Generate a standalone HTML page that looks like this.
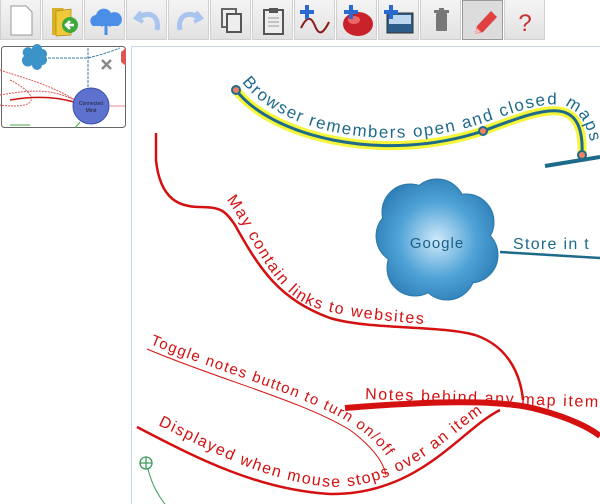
<!DOCTYPE html>
<html><head><meta charset="utf-8"><style>
*{margin:0;padding:0}
body{width:600px;height:504px;overflow:hidden;background:#fff;position:relative;font-family:"Liberation Sans",sans-serif}
.tb{position:absolute;top:0;left:0;height:42px;width:554px;display:flex}
.b{width:41px;height:40px;margin-right:1px;background:linear-gradient(#f4f4f4,#e2e2e2);border:1px solid #d0d0d0;border-top:none;box-sizing:border-box;position:relative}
.b svg{position:absolute;left:0;top:0}
.p{background:#dcdcdc;border:1px solid #999}
</style></head><body>
<div class="tb">
<div class="b"><svg width="41" height="40"><path d="M10,6 H25 L31,12 V35 H10 Z" fill="#fff" stroke="#999"/></svg></div>
<div class="b"><svg width="41" height="40"><path d="M9,8 H20 L22,11 V35 H9Z" fill="#d8b02a"/><path d="M13,11 L28,9 V35 L13,36Z" fill="#f0c93a" stroke="#b08a10" stroke-width=".7"/><circle cx="27" cy="25" r="8" fill="#3ea83a"/><path d="M31,25 H24 M27,21 L23,25 L27,29" stroke="#fff" stroke-width="2.5" fill="none"/></svg></div>
<div class="b"><svg width="41" height="40"><path d="M8,26 a6,6 0 0 1 3,-11 a8,8 0 0 1 15,-2 a6,6 0 0 1 7,13Z" fill="#4a8ee8"/><path d="M21,35 V22 M16,26 L21,21 L26,26" stroke="#4a8ee8" stroke-width="3" fill="none"/></svg></div>
<div class="b"><svg width="41" height="40"><path d="M14,12 L9,18 L16,22" fill="none" stroke="#a9c4ee" stroke-width="4"/><path d="M11,18 C22,10 33,16 30,30" fill="none" stroke="#a9c4ee" stroke-width="5"/></svg></div>
<div class="b"><svg width="41" height="40"><path d="M27,12 L32,18 L25,22" fill="none" stroke="#a9c4ee" stroke-width="4"/><path d="M30,18 C19,10 8,16 11,30" fill="none" stroke="#a9c4ee" stroke-width="5"/></svg></div>
<div class="b"><svg width="41" height="40"><rect x="11" y="9" width="14" height="18" fill="#eee" stroke="#666" stroke-width="2"/><rect x="16" y="14" width="14" height="18" fill="#eee" stroke="#555" stroke-width="2"/></svg></div>
<div class="b"><svg width="41" height="40"><rect x="11" y="10" width="19" height="24" fill="#eee" stroke="#555" stroke-width="2"/><rect x="16" y="8" width="9" height="5" fill="#555"/><path d="M15,18h11M15,22h11M15,26h11" stroke="#999"/></svg></div>
<div class="b"><svg width="41" height="40"><path d="M6,28 C12,16 16,16 20,26 C24,36 28,34 34,22" stroke="#8b1a1a" stroke-width="2" fill="none"/><path d="M12,5V19M5,12H19" stroke="#2a6ad0" stroke-width="4"/></svg></div>
<div class="b"><svg width="41" height="40"><ellipse cx="21" cy="24" rx="15" ry="12" fill="#c9222a"/><ellipse cx="17" cy="20" rx="6" ry="4" fill="#e66"/><path d="M14,5V19M7,12H21" stroke="#2a6ad0" stroke-width="4"/></svg></div>
<div class="b"><svg width="41" height="40"><rect x="8" y="13" width="26" height="20" fill="#2b5d88" stroke="#333"/><rect x="10" y="15" width="22" height="9" fill="#bcd7ee"/><path d="M12,5V19M5,12H19" stroke="#2a6ad0" stroke-width="4"/></svg></div>
<div class="b"><svg width="41" height="40"><rect x="15" y="13" width="11" height="18" rx="1" fill="#777"/><rect x="13" y="10" width="15" height="3" fill="#777"/><rect x="18" y="8" width="5" height="3" fill="#777"/></svg></div>
<div class="b p"><svg width="41" height="40"><path d="M12,33 L14,25 L28,10 L34,16 L20,31Z" fill="#e04040"/><path d="M12,33 L14,27 L18,31Z" fill="#fbb"/></svg></div>
<div class="b"><svg width="41" height="40"><text x="20" y="31" text-anchor="middle" font-size="24" fill="#c83030" font-family="Liberation Sans">?</text></svg></div>
</div>
<svg width="600" height="504" style="position:absolute;left:0;top:0" font-family="Liberation Sans,sans-serif">
<line x1="131" y1="46.5" x2="600" y2="46.5" stroke="#c6d8ee"/>
<line x1="131.5" y1="46" x2="131.5" y2="504" stroke="#c6d8ee"/>
<rect x="1.5" y="46.5" width="124" height="81" rx="3" fill="#fff" stroke="#666"/>
<g>
<path d="M0,70 C30,80 50,85 75,100 M0,95 C30,90 50,88 74,100 M10,80 C40,95 40,110 0,105" stroke="#d55" stroke-width="1" fill="none" stroke-dasharray="2 1"/>
<path d="M10,100 C40,95 60,98 74,102" stroke="#c11" stroke-width="1.5" fill="none"/>
<path d="M88,48 V95 M44,58 H88 C100,55 110,52 120,48" stroke="#3a7ea5" stroke-width="1" fill="none" stroke-dasharray="3 1"/>
<path d="M24,56 a5,5 0 0 1 8,-7 a5,5 0 0 1 10,0 a5,5 0 0 1 4,8 a5,5 0 0 1 -4,8 a5,5 0 0 1 -10,0 a5,5 0 0 1 -8,-9Z" fill="#3b93c8"/>
<circle cx="91" cy="106" r="18" fill="#5d72cf" stroke="#3a4fa8"/>
<text x="91" y="105" font-size="5" text-anchor="middle" fill="#223">Connected</text><text x="91" y="112" font-size="5" text-anchor="middle" fill="#223">Mind</text>
<path d="M110,106 H125" stroke="#e88" stroke-width="1"/>
<path d="M80,122 L75,128 M10,125 H30" stroke="#4a4" stroke-width="1"/>
<path d="M121,52 L126,48 V66 L121,62Z" fill="#d55"/>
<path d="M102,60 L111,69 M111,60 L102,69" stroke="#888" stroke-width="2.5"/>
</g>
<path d="M236,90 C270,135 380,165 483,131 C540,110 585,90 582,155" fill="none" stroke="#f5f53a" stroke-width="9"/>
<path d="M236,90 C270,135 380,165 483,131 C540,110 585,90 582,155" fill="none" stroke="#1e6a8a" stroke-width="3"/>
<path d="M545,166 L600,157" stroke="#1e6a8a" stroke-width="4"/>
<circle cx="236" cy="90" r="4" fill="#f08060" stroke="#1e6a8a" stroke-width="2"/>
<circle cx="483" cy="131" r="4" fill="#f08060" stroke="#1e6a8a" stroke-width="2"/>
<circle cx="582" cy="155" r="4" fill="#f08060" stroke="#1e6a8a" stroke-width="2"/>
<path id="bt" d="M242,82 C276,128 380,157 483,123 C540,104 582,84 592,150" fill="none"/>
<text font-size="17" fill="#1e6a8a" letter-spacing="1.6"><textPath href="#bt">Browser remembers open and closed maps</textPath></text>
<defs><radialGradient id="cg" gradientUnits="userSpaceOnUse" cx="437" cy="240" r="65"><stop offset="0" stop-color="#cfe9fa"/><stop offset=".6" stop-color="#4ea2d6"/><stop offset="1" stop-color="#2f80b8"/></radialGradient></defs>
<g fill="url(#cg)" stroke="#2a78aa" stroke-width="1">
<circle cx="437" cy="207" r="28"/><circle cx="466" cy="222" r="28"/><circle cx="470" cy="255" r="28"/><circle cx="447" cy="272" r="28"/><circle cx="415" cy="268" r="28"/><circle cx="404" cy="236" r="28"/><circle cx="410" cy="212" r="28"/>
</g>
<circle cx="437" cy="240" r="42" fill="url(#cg)"/>
<g fill="url(#cg)"><circle cx="437" cy="207" r="27"/><circle cx="466" cy="222" r="27"/><circle cx="470" cy="255" r="27"/><circle cx="447" cy="272" r="27"/><circle cx="415" cy="268" r="27"/><circle cx="404" cy="236" r="27"/><circle cx="410" cy="212" r="27"/></g>
<circle cx="437" cy="240" r="40" fill="url(#cg)"/>
<text x="437" y="248" font-size="15" fill="#1e5f85" text-anchor="middle" letter-spacing="1">Google</text>
<path d="M500,252 L600,258" stroke="#1e6a8a" stroke-width="2.5"/>
<text x="513" y="249" font-size="16" fill="#1e6a8a" letter-spacing="1.3">Store in t</text>
<path d="M156,133 L156,160 C160,200 180,207 200,207 C220,207 225,210 235,225 C260,270 280,300 330,318 C370,330 440,325 475,335 C505,345 520,370 523,400" fill="none" stroke="#d41010" stroke-width="2.5"/>
<path id="rt" d="M226,200 C238,210 260,265 285,288 C300,305 320,310 340,314 C380,322 420,322 450,328" fill="none"/>
<text font-size="16" fill="#d41010" letter-spacing="1.6"><textPath href="#rt">May contain links to websites</textPath></text>
<path d="M345,408 C420,402 500,398 540,410 C570,418 590,428 600,436" fill="none" stroke="#d41010" stroke-width="6"/>
<text x="365" y="399" font-size="16" fill="#d41010" letter-spacing="1.6" transform="rotate(2 365 400)">Notes behind any map item</text>
<path d="M137,427 C200,460 260,490 330,494 C420,495 460,430 500,410" fill="none" stroke="#d41010" stroke-width="2.5"/>
<path id="dt" d="M158,425 C210,450 260,480 330,487 C410,488 450,430 495,405" fill="none"/>
<text font-size="16" fill="#d41010" letter-spacing="1.5"><textPath href="#dt">Displayed when mouse stops over an item</textPath></text>
<path d="M147,349 C220,380 300,400 350,430 C370,445 383,460 386,475" fill="none" stroke="#d41010" stroke-width="1"/>
<path id="tt" d="M150,344 C220,372 300,394 345,420 C362,430 375,440 388,458" fill="none"/>
<text font-size="15" fill="#d41010" letter-spacing="1.4"><textPath href="#tt">Toggle notes button to turn on/off</textPath></text>
<circle cx="146" cy="463" r="6" fill="none" stroke="#3a9a5a" stroke-width="1.3"/>
<path d="M146,457V469M140,463H152" stroke="#3a9a5a" stroke-width="1.3"/>
<path d="M148,469 C152,485 158,495 165,504" fill="none" stroke="#3a9a5a"/>
</svg>
</body></html>
